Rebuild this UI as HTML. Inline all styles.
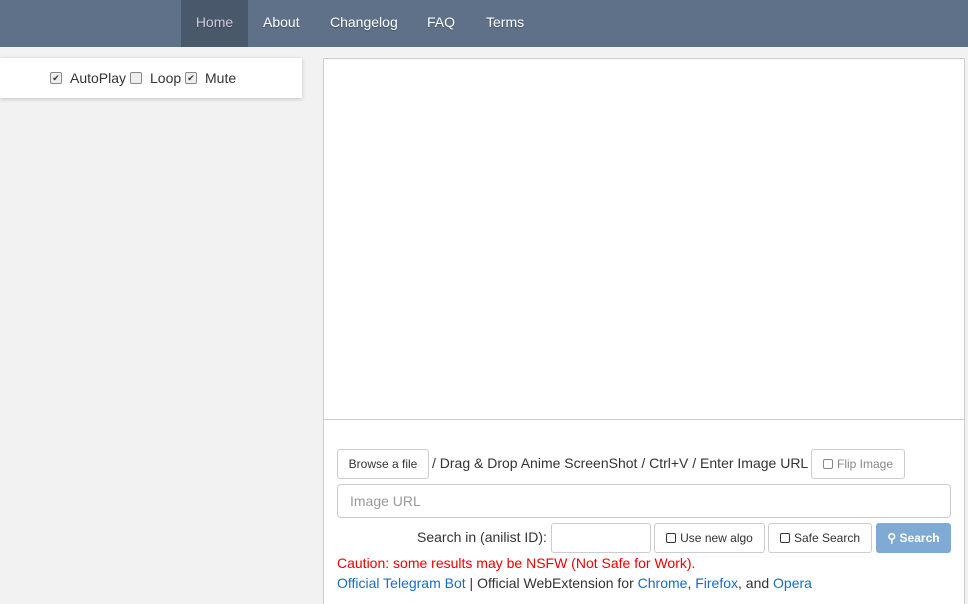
<!DOCTYPE html>
<html><head><style>
html,body{margin:0;width:968px;height:604px;overflow:hidden}
body{background:#f2f2f2;font-family:"Liberation Sans",sans-serif;font-size:14px;color:#333;position:relative}
.nav{position:absolute;left:0;top:0;width:968px;height:47px;background:#5f7189}
.nav a{position:absolute;top:0;height:47px;line-height:45px;color:#fff;text-decoration:none;font-size:14px;text-shadow:0 1px 1px rgba(0,0,0,.3)}
.home{background:#4a586b;color:#ccd!important}
.left{position:absolute;left:0;top:58px;width:302px;height:40px;background:#fff;box-shadow:0 1px 4px rgba(0,0,0,.2)}
.cb{position:absolute;width:10px;height:10px;border:1px solid #888;border-radius:2px;background:#eee;font-size:9px;line-height:10px;text-align:center}
.panel{position:absolute;left:323px;top:58px;width:640px;height:546px;background:#fff;border:1px solid #ccc;border-bottom:none}
.video{position:absolute;left:0;top:0;width:640px;height:360px;border-bottom:1px solid #ccc}
.btn{position:absolute;border:1px solid #ccc;border-radius:3px;background:#fff;font-size:12px;box-sizing:border-box;text-align:center}
.sq{display:inline-block;width:8px;height:8px;border:1.5px solid #333;border-radius:2px;vertical-align:-1px;margin-right:4px}
.t{position:absolute;white-space:nowrap}
a.l{color:#1a6ac8;text-decoration:none}
</style></head><body>
<div class="nav">
<a class="home" style="left:181px;width:67px;text-align:center">Home</a>
<a style="left:263px">About</a>
<a style="left:330px">Changelog</a>
<a style="left:427px">FAQ</a>
<a style="left:486px">Terms</a>
</div>
<div class="left">
<div class="cb" style="left:50px;top:14px">✔</div><span class="t" style="left:70px;top:12px">AutoPlay</span>
<div class="cb" style="left:130px;top:14px"></div><span class="t" style="left:150px;top:12px">Loop</span>
<div class="cb" style="left:185px;top:14px">✔</div><span class="t" style="left:205px;top:12px">Mute</span>
</div>
<div class="panel">
<div class="video"></div>
<div class="btn" style="left:13px;top:390px;width:92px;height:30px;line-height:28px">Browse a file</div>
<span class="t" style="left:108px;top:396px">/ Drag &amp; Drop Anime ScreenShot / Ctrl+V / Enter Image URL</span>
<div class="btn" style="left:487px;top:390px;width:94px;height:30px;line-height:28px;color:#888"><span class="sq" style="border-color:#888"></span>Flip Image</div>
<div class="btn" style="left:13px;top:425px;width:614px;height:34px;line-height:32px;text-align:left;padding-left:12px;font-size:14px;color:#999;border-radius:4px">Image URL</div>
<span class="t" style="left:93px;top:470px">Search in (anilist ID):</span>
<div class="btn" style="left:227px;top:464px;width:100px;height:30px"></div>
<div class="btn" style="left:330px;top:464px;width:111px;height:30px;line-height:28px;color:#333"><span class="sq"></span>Use new algo</div>
<div class="btn" style="left:444px;top:464px;width:104px;height:30px;line-height:28px;color:#333"><span class="sq"></span>Safe Search</div>
<div class="btn" style="left:552px;top:464px;width:75px;height:30px;line-height:28px;color:#fff;background:#7faad4;border-color:#7faad4;font-weight:bold">&#9906; Search</div>
<span class="t" style="left:13px;top:496px;color:#e00">Caution: some results may be NSFW (Not Safe for Work).</span>
<span class="t" style="left:13px;top:516px"><a class="l">Official Telegram Bot</a> | Official WebExtension for <a class="l">Chrome</a>, <a class="l">Firefox</a>, and <a class="l">Opera</a></span>
</div>
</body></html>
